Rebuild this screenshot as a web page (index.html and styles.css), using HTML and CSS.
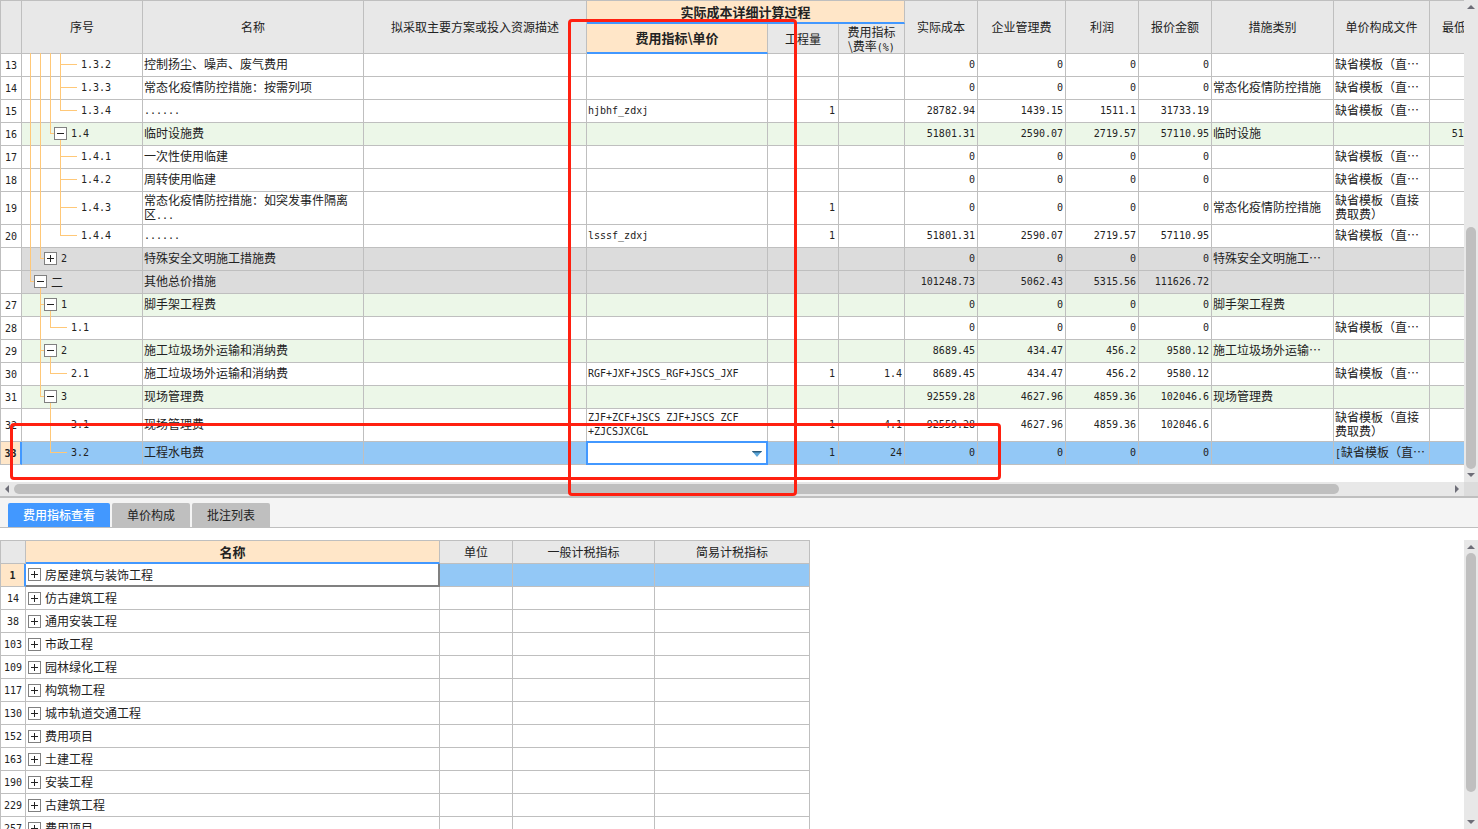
FILE: index.html
```html
<!DOCTYPE html>
<html lang="zh-CN">
<head>
<meta charset="utf-8">
<title>措施项目成本</title>
<link rel="stylesheet" href="styles.css">
</head>
<body>
<main class="app">
<section class="upper">
<div class="pane">
<div class="viewport">
<table class="grid cost">
<colgroup><col class="w21"><col class="w121"><col class="w221"><col class="w223"><col class="w181"><col class="w71"><col class="w66"><col class="w73"><col class="w88"><col class="w73"><col class="w73"><col class="w122"><col class="w96"><col class="w73"></colgroup>
<thead>
<tr class="h1"><th rowspan="2"></th><th rowspan="2">序号</th><th rowspan="2">名称</th><th rowspan="2">拟采取主要方案或投入资源描述</th><th colspan="3" class="active">实际成本详细计算过程</th><th rowspan="2">实际成本</th><th rowspan="2">企业管理费</th><th rowspan="2">利润</th><th rowspan="2">报价金额</th><th rowspan="2">措施类别</th><th rowspan="2">单价构成文件</th><th rowspan="2">最低报价</th></tr>
<tr class="h2"><th class="active">费用指标\单价</th><th>工程量</th><th>费用指标<br>\费率<span class="m">(%)</span></th></tr>
</thead>
<tbody>
<tr><th>13</th><td class="tc"><div class="tree"><i class="v"></i><i class="v"></i><i class="v"></i><i class="t"></i><i class="leaf"></i>1.3.2</div></td><td>控制扬尘、噪声、废气费用</td><td></td><td></td><td class="n"></td><td class="n"></td><td class="n">0</td><td class="n">0</td><td class="n">0</td><td class="n">0</td><td></td><td>缺省模板（直…</td><td></td></tr>
<tr><th>14</th><td class="tc"><div class="tree"><i class="v"></i><i class="v"></i><i class="v"></i><i class="t"></i><i class="leaf"></i>1.3.3</div></td><td>常态化疫情防控措施：按需列项</td><td></td><td></td><td class="n"></td><td class="n"></td><td class="n">0</td><td class="n">0</td><td class="n">0</td><td class="n">0</td><td>常态化疫情防控措施</td><td>缺省模板（直…</td><td></td></tr>
<tr><th>15</th><td class="tc"><div class="tree"><i class="v"></i><i class="v"></i><i class="v"></i><i class="l"></i><i class="leaf"></i>1.3.4</div></td><td class="m">......</td><td></td><td class="m">hjbhf_zdxj</td><td class="n q">1</td><td class="n"></td><td class="n">28782.94</td><td class="n">1439.15</td><td class="n">1511.1</td><td class="n">31733.19</td><td></td><td>缺省模板（直…</td><td></td></tr>
<tr class="green"><th>16</th><td class="tc"><div class="tree"><i class="v"></i><i class="v"></i><i class="l"></i><span class="node open"><button class="toggle" aria-label="折叠"></button></span>1.4</div></td><td>临时设施费</td><td></td><td></td><td class="n"></td><td class="n"></td><td class="n">51801.31</td><td class="n">2590.07</td><td class="n">2719.57</td><td class="n">57110.95</td><td>临时设施</td><td></td><td class="n">51801.31</td></tr>
<tr><th>17</th><td class="tc"><div class="tree"><i class="v"></i><i class="v"></i><i></i><i class="t"></i><i class="leaf"></i>1.4.1</div></td><td>一次性使用临建</td><td></td><td></td><td class="n"></td><td class="n"></td><td class="n">0</td><td class="n">0</td><td class="n">0</td><td class="n">0</td><td></td><td>缺省模板（直…</td><td></td></tr>
<tr><th>18</th><td class="tc"><div class="tree"><i class="v"></i><i class="v"></i><i></i><i class="t"></i><i class="leaf"></i>1.4.2</div></td><td>周转使用临建</td><td></td><td></td><td class="n"></td><td class="n"></td><td class="n">0</td><td class="n">0</td><td class="n">0</td><td class="n">0</td><td></td><td>缺省模板（直…</td><td></td></tr>
<tr class="tall"><th>19</th><td class="tc"><div class="tree"><i class="v"></i><i class="v"></i><i></i><i class="t"></i><i class="leaf"></i>1.4.3</div></td><td>常态化疫情防控措施：如突发事件隔离<br>区<span class="m">...</span></td><td></td><td></td><td class="n q">1</td><td class="n"></td><td class="n">0</td><td class="n">0</td><td class="n">0</td><td class="n">0</td><td>常态化疫情防控措施</td><td>缺省模板（直接<br>费取费）</td><td></td></tr>
<tr><th>20</th><td class="tc"><div class="tree"><i class="v"></i><i class="v"></i><i></i><i class="l"></i><i class="leaf"></i>1.4.4</div></td><td class="m">......</td><td></td><td class="m">lsssf_zdxj</td><td class="n q">1</td><td class="n"></td><td class="n">51801.31</td><td class="n">2590.07</td><td class="n">2719.57</td><td class="n">57110.95</td><td></td><td>缺省模板（直…</td><td></td></tr>
<tr class="gray"><th></th><td class="tc"><div class="tree"><i class="v"></i><i class="l"></i><span class="node"><button class="toggle plus" aria-label="展开"></button></span>2</div></td><td>特殊安全文明施工措施费</td><td></td><td></td><td class="n"></td><td class="n"></td><td class="n">0</td><td class="n">0</td><td class="n">0</td><td class="n">0</td><td>特殊安全文明施工…</td><td></td><td></td></tr>
<tr class="gray"><th></th><td class="tc"><div class="tree cjk"><i class="l"></i><span class="node open"><button class="toggle" aria-label="折叠"></button></span>二</div></td><td>其他总价措施</td><td></td><td></td><td class="n"></td><td class="n"></td><td class="n">101248.73</td><td class="n">5062.43</td><td class="n">5315.56</td><td class="n">111626.72</td><td></td><td></td><td></td></tr>
<tr class="green"><th>27</th><td class="tc"><div class="tree"><i></i><i class="t"></i><span class="node open"><button class="toggle" aria-label="折叠"></button></span>1</div></td><td>脚手架工程费</td><td></td><td></td><td class="n"></td><td class="n"></td><td class="n">0</td><td class="n">0</td><td class="n">0</td><td class="n">0</td><td>脚手架工程费</td><td></td><td></td></tr>
<tr><th>28</th><td class="tc"><div class="tree"><i></i><i class="v"></i><i class="l"></i><i class="leaf"></i>1.1</div></td><td></td><td></td><td></td><td class="n"></td><td class="n"></td><td class="n">0</td><td class="n">0</td><td class="n">0</td><td class="n">0</td><td></td><td>缺省模板（直…</td><td></td></tr>
<tr class="green"><th>29</th><td class="tc"><div class="tree"><i></i><i class="t"></i><span class="node open"><button class="toggle" aria-label="折叠"></button></span>2</div></td><td>施工垃圾场外运输和消纳费</td><td></td><td></td><td class="n"></td><td class="n"></td><td class="n">8689.45</td><td class="n">434.47</td><td class="n">456.2</td><td class="n">9580.12</td><td>施工垃圾场外运输…</td><td></td><td></td></tr>
<tr><th>30</th><td class="tc"><div class="tree"><i></i><i class="v"></i><i class="l"></i><i class="leaf"></i>2.1</div></td><td>施工垃圾场外运输和消纳费</td><td></td><td class="m">RGF+JXF+JSCS_RGF+JSCS_JXF</td><td class="n q">1</td><td class="n">1.4</td><td class="n">8689.45</td><td class="n">434.47</td><td class="n">456.2</td><td class="n">9580.12</td><td></td><td>缺省模板（直…</td><td></td></tr>
<tr class="green"><th>31</th><td class="tc"><div class="tree"><i></i><i class="l"></i><span class="node open"><button class="toggle" aria-label="折叠"></button></span>3</div></td><td>现场管理费</td><td></td><td></td><td class="n"></td><td class="n"></td><td class="n">92559.28</td><td class="n">4627.96</td><td class="n">4859.36</td><td class="n">102046.6</td><td>现场管理费</td><td></td><td></td></tr>
<tr class="tall"><th>32</th><td class="tc"><div class="tree"><i></i><i></i><i class="t"></i><i class="leaf"></i>3.1</div></td><td>现场管理费</td><td></td><td class="m">ZJF+ZCF+JSCS_ZJF+JSCS_ZCF<br>+ZJCSJXCGL</td><td class="n q">1</td><td class="n">4.1</td><td class="n">92559.28</td><td class="n">4627.96</td><td class="n">4859.36</td><td class="n">102046.6</td><td></td><td>缺省模板（直接<br>费取费）</td><td></td></tr>
<tr class="current"><th>33</th><td class="tc"><div class="tree"><i></i><i></i><i class="l"></i><i class="leaf"></i>3.2</div></td><td>工程水电费</td><td></td><td class="editor"><div class="combo"><select aria-label="费用指标\单价"><option></option></select><svg width="10" height="6" viewBox="0 0 10 6"><path d="M0 0H10L5 6Z" fill="#5aa5d8"/><path d="M0 0H10L9 1.4H1Z" fill="#2c5c7c"/></svg></div></td><td class="n q">1</td><td class="n">24</td><td class="n">0</td><td class="n">0</td><td class="n">0</td><td class="n">0</td><td></td><td><span class="m">[</span>缺省模板（直…</td><td></td></tr>
</tbody>
</table>
</div>
<div class="vbar"><svg width="8" height="4" viewBox="0 0 8 4"><path d="M0 4L4 0L8 4Z"/></svg><div class="track"><div class="thumb cost-y"></div></div><svg width="8" height="4" viewBox="0 0 8 4"><path d="M0 0L4 4L8 0Z"/></svg></div>
</div>
<div class="hrow">
<div class="hbar"><svg width="4" height="8" viewBox="0 0 4 8"><path d="M4 0L0 4L4 8Z"/></svg><div class="track"><div class="thumb cost-x"></div></div><svg width="4" height="8" viewBox="0 0 4 8"><path d="M0 0L4 4L0 8Z"/></svg></div>
<div class="corner"></div>
</div>
<div class="mark mark-col"></div>
<div class="mark mark-row"></div>
</section>
<nav class="tabs"><button class="tab on">费用指标查看</button><button class="tab">单价构成</button><button class="tab">批注列表</button></nav>
<section class="lower">
<div class="viewport">
<table class="grid index">
<colgroup><col class="w25"><col class="w414"><col class="w73"><col class="w142"><col class="w155"></colgroup>
<thead><tr><th></th><th class="active">名称</th><th>单位</th><th>一般计税指标</th><th>简易计税指标</th></tr></thead>
<tbody>
<tr class="current"><th>1</th><td class="focus"><div class="item"><button class="toggle plus" aria-label="展开"></button>房屋建筑与装饰工程</div></td><td></td><td></td><td></td></tr>
<tr><th>14</th><td><div class="item"><button class="toggle plus" aria-label="展开"></button>仿古建筑工程</div></td><td></td><td></td><td></td></tr>
<tr><th>38</th><td><div class="item"><button class="toggle plus" aria-label="展开"></button>通用安装工程</div></td><td></td><td></td><td></td></tr>
<tr><th>103</th><td><div class="item"><button class="toggle plus" aria-label="展开"></button>市政工程</div></td><td></td><td></td><td></td></tr>
<tr><th>109</th><td><div class="item"><button class="toggle plus" aria-label="展开"></button>园林绿化工程</div></td><td></td><td></td><td></td></tr>
<tr><th>117</th><td><div class="item"><button class="toggle plus" aria-label="展开"></button>构筑物工程</div></td><td></td><td></td><td></td></tr>
<tr><th>130</th><td><div class="item"><button class="toggle plus" aria-label="展开"></button>城市轨道交通工程</div></td><td></td><td></td><td></td></tr>
<tr><th>152</th><td><div class="item"><button class="toggle plus" aria-label="展开"></button>费用项目</div></td><td></td><td></td><td></td></tr>
<tr><th>163</th><td><div class="item"><button class="toggle plus" aria-label="展开"></button>土建工程</div></td><td></td><td></td><td></td></tr>
<tr><th>190</th><td><div class="item"><button class="toggle plus" aria-label="展开"></button>安装工程</div></td><td></td><td></td><td></td></tr>
<tr><th>229</th><td><div class="item"><button class="toggle plus" aria-label="展开"></button>古建筑工程</div></td><td></td><td></td><td></td></tr>
<tr><th>257</th><td><div class="item"><button class="toggle plus" aria-label="展开"></button>费用项目</div></td><td></td><td></td><td></td></tr>
</tbody>
</table>
</div>
<div class="vbar"><svg width="8" height="4" viewBox="0 0 8 4"><path d="M0 4L4 0L8 4Z"/></svg><div class="track"><div class="thumb index-y"></div></div><svg width="8" height="4" viewBox="0 0 8 4"><path d="M0 0L4 4L8 0Z"/></svg></div>
</section>
</main>
</body>
</html>
```
FILE: styles.css
```css
:root {
  --line: #bfbfbf;
  --head: #e8e8e8;
  --peach: #ffe6c8;
  --blue: #4298ff;
  --select: #93c8f6;
  --guide: #ffc878;
  --mono: "DejaVu Sans Mono", "Liberation Mono", monospace;
  --cjk: "Noto Sans CJK SC", sans-serif;
}

* { box-sizing: border-box; }

body {
  margin: 0;
  background: #fff;
  color: #222;
  font: 12px/14px var(--cjk);
}

button, select { font: inherit; color: inherit; }

.app {
  display: flex;
  flex-direction: column;
  height: 100vh;
  overflow: hidden;
}

/* Panes */
.upper { position: relative; flex: none; border-bottom: 2px solid var(--line); }
.pane { display: flex; }
.viewport { flex: 1; min-width: 0; overflow: hidden; }
.upper .viewport { padding-bottom: 17px; }
.lower { display: flex; flex: 1; min-height: 0; margin-top: 12px; }

/* Grids */
.grid {
  table-layout: fixed;
  border-collapse: separate;
  border-spacing: 0;
  border: solid var(--line);
  border-width: 1px 0 0 1px;
}
.cost { width: 1503px; }
.index { width: 810px; }
.w21 { width: 21px; }
.w25 { width: 25px; }
.w66 { width: 66px; }
.w71 { width: 71px; }
.w73 { width: 73px; }
.w88 { width: 88px; }
.w96 { width: 96px; }
.w121 { width: 121px; }
.w122 { width: 122px; }
.w142 { width: 142px; }
.w155 { width: 155px; }
.w181 { width: 181px; }
.w221 { width: 221px; }
.w223 { width: 223px; }
.w414 { width: 414px; }

.grid tr { height: 23px; }
.grid .tall { height: 33px; }
.grid .h2 { height: 30px; }
.grid th, .grid td {
  padding: 0 2px;
  border: solid var(--line);
  border-width: 0 1px 1px 0;
  text-align: left;
  vertical-align: middle;
  white-space: nowrap;
  font-weight: 400;
}
.cost td { padding: 0 2px 2px 1px; }
.grid th { text-align: center; padding: 0; }
.grid thead th { background: var(--head); }
.grid thead .active {
  background: var(--peach);
  border-bottom: 2px solid var(--blue);
  font-size: 13px;
  font-weight: 700;
}
.grid tbody th { padding-top: 2px; font: 10px/14px var(--mono); }
.m { font-family: var(--mono); font-size: 10px; }
span.m { line-height: 10px; }
.grid td.m { padding: 0 1px; }
.grid .n { padding: 0 2px; font-family: var(--mono); font-size: 10px; text-align: right; }
.grid .q { padding-right: 3px; }

.green td { background: #ecf7e8; }
.gray td { background: #dcdcdc; }
.current td { background: var(--select); }
.grid tbody .current th {
  background: var(--peach);
  border-right: 2px solid var(--blue);
  font-weight: 700;
}
.grid .focus {
  background: #fff;
  border-right: 2px solid #808080;
  border-bottom: 2px solid #808080;
}

/* Tree column */
.grid .tc { padding: 0 2px; }
.tree {
  display: flex;
  align-items: center;
  height: 23px;
  margin-top: -1px;
  padding-left: 1px;
  font-family: var(--mono);
  font-size: 10px;
}
.tree.cjk { font-family: var(--cjk); font-size: 12px; }
.tall .tree { height: 33px; }
.tree i {
  flex: none;
  width: 10px;
  height: 100%;
  background-repeat: no-repeat;
}
.tree .v {
  background-image: linear-gradient(var(--guide), var(--guide));
  background-position: 5px 0;
  background-size: 1px 100%;
}
.tree .t, .tree .l {
  background-image: linear-gradient(var(--guide), var(--guide)), linear-gradient(var(--guide), var(--guide));
  background-position: 5px 0, 5px 50%;
  background-size: 1px 100%, 5px 1px;
}
.tree .l { background-size: 1px 50%, 5px 1px; }
.tree .leaf {
  width: 13px;
  margin: 0 4px 0 -1px;
  background-image: linear-gradient(var(--guide), var(--guide));
  background-position: 0 50%;
  background-size: 13px 1px;
}
.node {
  display: flex;
  align-items: center;
  height: 100%;
  margin: 0 4px 0 -1px;
}
.node.open {
  background: linear-gradient(var(--guide), var(--guide)) 6px 100% / 1px 50% no-repeat;
}
.toggle {
  flex: none;
  width: 13px;
  height: 13px;
  padding: 0;
  border: 1px solid #808080;
  background: linear-gradient(#222, #222) 50% 50% / 7px 1px no-repeat #fff;
}
.toggle.plus {
  background:
    linear-gradient(#222, #222) 50% 50% / 7px 1px no-repeat,
    linear-gradient(#222, #222) 50% 50% / 1px 7px no-repeat,
    #fff;
}
.item { display: flex; align-items: center; gap: 4px; }

/* Cell editor */
.grid .editor { padding: 0; }
.combo { position: relative; margin: -1px; }
.combo select {
  display: block;
  width: 100%;
  height: 24px;
  border: 2px solid var(--blue);
  border-radius: 0;
  background: #fff;
  appearance: none;
  outline: 0;
}
.combo svg { position: absolute; right: 6px; top: 10px; pointer-events: none; }

/* Scroll bars */
.vbar, .hbar {
  display: flex;
  align-items: center;
  background: var(--head);
  fill: #6e6e78;
}
.vbar { flex: none; flex-direction: column; width: 14px; padding: 5px 0; }
.hbar { flex: 1; height: 14px; padding: 0 5px; }
.hrow { display: flex; }
.corner { width: 14px; background: #dcdcdc; }
.track { flex: 1; min-width: 0; min-height: 0; }
.vbar .track { width: 10px; margin: 4px 0; }
.hbar .track { height: 10px; margin: 0 5px; }
.thumb { height: 100%; border-radius: 5px; background: var(--line); }
.cost-x { width: 92.3%; }
.vbar .cost-y { height: 53%; margin-top: 214px; }
.vbar .index-y { height: 91%; }

/* Highlight frames */
.mark {
  position: absolute;
  border: 3px solid #ff2010;
  border-radius: 4px;
  pointer-events: none;
}
.mark-col { left: 568px; top: 19px; width: 229px; height: 477px; }
.mark-row { left: 10px; top: 423px; width: 991px; height: 57px; }

/* Tabs */
.tabs {
  display: flex;
  flex: none;
  align-items: flex-end;
  gap: 2px;
  height: 30px;
  padding: 0 8px;
  border-bottom: 1px solid var(--line);
  background: #f4f4f4;
}
.tab {
  height: 24px;
  padding: 0 15px;
  border: 0;
  border-radius: 2px 2px 0 0;
  background: var(--line);
}
.tab.on { background: var(--blue); color: #fff; font-weight: 500; }
```
